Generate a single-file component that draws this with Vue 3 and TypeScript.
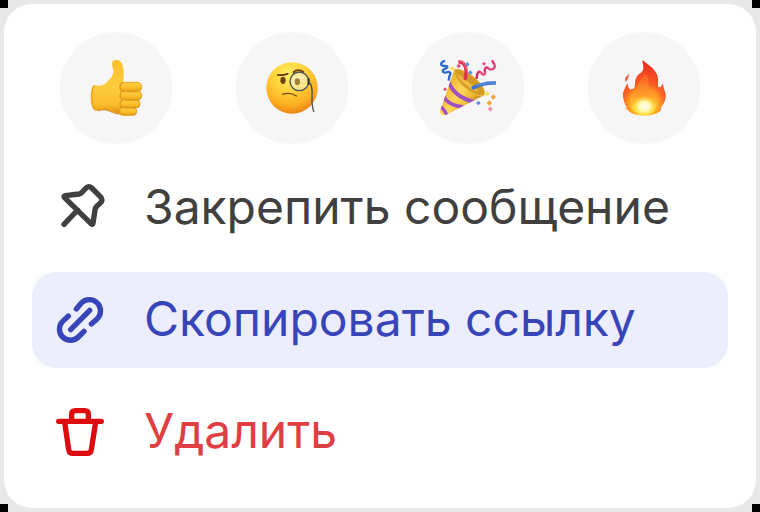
<script setup lang="ts">
import { ref } from 'vue'

type ActionId = 'pin' | 'copy' | 'delete'

interface Action {
  id: ActionId
  label: string
}

const actions: Action[] = [
  { id: 'pin', label: 'Закрепить сообщение' },
  { id: 'copy', label: 'Скопировать ссылку' },
  { id: 'delete', label: 'Удалить' },
]

const active = ref<ActionId>('copy')
</script>

<template>
  <main class="backdrop">
    <section class="menu">
      <div class="reactions">
        <button class="reaction" type="button" aria-label="Нравится">
          <svg class="emoji" viewBox="108 108 168 168" aria-hidden="true">
            <defs>
              <linearGradient id="hand" x1="0" y1="0" x2="0" y2="1">
                <stop offset="0" stop-color="#f9c02c" />
                <stop offset="0.5" stop-color="#ffcd3e" />
                <stop offset="0.82" stop-color="#fbbd2c" />
                <stop offset="1" stop-color="#e08e17" />
              </linearGradient>
              <linearGradient id="finger" x1="0" y1="0" x2="0" y2="1">
                <stop offset="0" stop-color="#ffcf45" />
                <stop offset="0.6" stop-color="#fbbd28" />
                <stop offset="1" stop-color="#e59a16" />
              </linearGradient>
            </defs>
            <path d="M126 183C141 187 153 185 162 177C175 165 185 155 184 140C183 129 176 117 183 111C191 105 206 108 210 119C217 135 216 154 213 178L232 188V260L212 271C190 268 182 263 168 259C154 255 145 262 128 259C112 250 113 195 126 183Z" fill="url(#hand)" />
            <path d="M126 184C117 197 117 243 129 258" fill="none" stroke="#e9a322" stroke-width="4" />
            <path d="M136 260C151 256 163 256 174 262C187 268 198 270 210 271" fill="none" stroke="#d88a16" stroke-width="3" />
            <g fill="url(#finger)" stroke="#dc9518" stroke-width="2.5">
              <rect x="203" y="250" width="51" height="24" rx="11" />
              <rect x="203" y="227" width="61" height="25" rx="12" />
              <rect x="204" y="201" width="65" height="28" rx="13" />
              <rect x="203" y="175" width="66" height="28" rx="13" />
            </g>
            <path d="M214 176C203 180 203 193 208 202C204 210 204 220 209 228C204 237 205 245 209 251" fill="none" stroke="#e19b1c" stroke-width="3" />
          </svg>
        </button>

        <button class="reaction" type="button" aria-label="Любопытно">
          <svg class="emoji" viewBox="108 108 168 168" aria-hidden="true">
            <defs>
              <radialGradient id="face" cx="0.45" cy="0.25" r="0.78">
                <stop offset="0" stop-color="#fff067" />
                <stop offset="0.4" stop-color="#ffd43b" />
                <stop offset="0.75" stop-color="#fcae21" />
                <stop offset="1" stop-color="#ec7d14" />
              </radialGradient>
            </defs>
            <circle cx="192" cy="192" r="77" fill="url(#face)" />
            <ellipse cx="165" cy="169" rx="8" ry="11" fill="#75410b" />
            <path d="M149 153C160 154 170 153 179 149" fill="none" stroke="#5b330c" stroke-width="5" stroke-linecap="round" />
            <path d="M196 145C204 136 218 137 226 144" fill="none" stroke="#7d3b10" stroke-width="5" stroke-linecap="round" />
            <path d="M164 211C176 207 193 208 205 216" fill="none" stroke="#70400d" stroke-width="4" stroke-linecap="round" />
            <circle cx="214" cy="172" r="28" fill="#f4e8a0" fill-opacity="0.82" stroke="#4e5457" stroke-width="4" />
            <path d="M191 169C196 150 220 146 233 158L199 190Z" fill="#ffffff" opacity="0.32" />
            <ellipse cx="208" cy="173" rx="8" ry="10" fill="#a18134" />
            <path d="M242 165V179" stroke="#292c2e" stroke-width="6" stroke-linecap="round" />
            <path d="M243 174C259 187 249 220 253 244Q254 256 258 264" fill="none" stroke="#4b4f50" stroke-width="4" />
          </svg>
        </button>

        <button class="reaction" type="button" aria-label="Праздник">
          <svg class="emoji" viewBox="108 108 168 168" aria-hidden="true">
            <defs>
              <linearGradient id="cone" x1="0" y1="0.3" x2="0.9" y2="0.9">
                <stop offset="0" stop-color="#e5a51d" />
                <stop offset="0.45" stop-color="#ffd85a" />
                <stop offset="0.7" stop-color="#edb62f" />
                <stop offset="1" stop-color="#a66a12" />
              </linearGradient>
              <clipPath id="cone-shape">
                <path d="M151 137L109 258Q106 275 124 274L240 214Z" />
              </clipPath>
            </defs>
            <path d="M151 137L109 258Q106 275 124 274L240 214Z" fill="url(#cone)" />
            <g clip-path="url(#cone-shape)" fill="none" stroke="#a14fc4">
              <path d="M132 170C144 204 172 225 211 234" stroke-width="12" />
              <path d="M116 213C126 235 145 246 179 249" stroke-width="11" />
              <path d="M105 243C116 251 124 262 132 278" stroke-width="10" />
            </g>
            <path d="M152 137C164 132 191 143 216 165C237 184 248 207 239 214C226 220 195 205 172 180C156 162 147 144 152 137Z" fill="#d39a23" stroke="#edbd46" stroke-width="3" />
            <path d="M156 147C176 160 202 178 225 204C204 202 169 174 156 147Z" fill="#edbd3f" />
            <path d="M163 114C184 112 191 136 183 168" fill="none" stroke="#dd3454" stroke-width="10" />
            <path d="M164 111C177 111 186 121 187 136" fill="none" stroke="#ff7189" stroke-width="3" />
            <path d="M204 193C225 181 246 176 276 177" fill="none" stroke="#3b72cd" stroke-width="11" />
            <path d="M218 185C238 178 255 177 276 177" fill="none" stroke="#6a9ee9" stroke-width="3" />
            <path d="M123 110C106 116 109 127 122 126C133 125 133 132 120 136C113 140 116 148 127 145C138 141 143 148 136 157L134 170" fill="none" stroke="#2f69ca" stroke-width="7" />
            <path d="M218 165C218 145 225 139 231 146C237 156 244 152 243 144C240 133 247 126 255 134C265 140 275 132 271 121C268 115 263 111 267 108" fill="none" stroke="#d52e63" stroke-width="7" />
            <path d="M227 143C235 157 246 153 243 143M251 131C264 141 273 130 270 120" fill="none" stroke="#f57ba0" stroke-width="3" />
            <path d="M190 114l7 7-7 7-7-7zM199 139l7 7-7 7-7-7zM223 230l7 7-7 7-7-7z" fill="#5b91dd" />
            <path d="M240 113l6 6-6 6-6-6zM123 190l6 6-6 6-6-6zM164 119l7 7-7 7-7-7z" fill="#e85478" />
            <path d="M144 127l7 7-7 7-7-7zM250 202l7 8-7 7-8-7z" fill="#f4e247" />
            <path d="M268 211l8 8-8 8-8-8zM256 229l8 8-8 8-8-8z" fill="#f2a344" />
            <path d="M259 247l8 8-8 8-8-8z" fill="#f092ab" />
          </svg>
        </button>

        <button class="reaction" type="button" aria-label="Огонь">
          <svg class="emoji" viewBox="108 108 168 168" aria-hidden="true">
            <defs>
              <radialGradient id="flame" gradientUnits="userSpaceOnUse" cx="192" cy="244" r="135">
                <stop offset="0" stop-color="#ffdc2b" />
                <stop offset="0.3" stop-color="#ffab23" />
                <stop offset="0.5" stop-color="#fa5d25" />
                <stop offset="1" stop-color="#e8291d" />
              </radialGradient>
              <linearGradient id="flame-inner" x1="0" y1="0" x2="0" y2="1">
                <stop offset="0" stop-color="#f96828" stop-opacity="0.7" />
                <stop offset="0.5" stop-color="#ff9a28" />
                <stop offset="1" stop-color="#ffe43b" />
              </linearGradient>
              <radialGradient id="flame-core">
                <stop offset="0" stop-color="#fffff4" />
                <stop offset="0.45" stop-color="#fffab0" />
                <stop offset="1" stop-color="#ffdf26" stop-opacity="0" />
              </radialGradient>
            </defs>
            <path d="M188 108C205 124 227 134 233 158C237 174 230 188 238 190C246 190 244 181 249 180C249 195 261 206 256 225C254 239 247 242 244 249L242 260C224 279 158 280 144 259L135 251L141 251C130 237 126 210 131 201C136 192 137 184 143 178C144 188 146 198 155 196C169 194 162 177 168 163C174 146 190 151 190 130C190 120 186 115 188 108Z" fill="url(#flame)" />
            <path d="M192 150C205 153 207 168 205 181C203 200 217 207 222 197C221 214 231 223 231 239C227 267 202 275 183 271C153 266 146 239 153 213C165 220 174 207 174 190C174 170 190 168 192 150Z" fill="url(#flame-inner)" />
            <ellipse cx="193" cy="247" rx="38" ry="32" fill="url(#flame-core)" />
            <path d="M148 149Q146 163 138 174Q131 163 140 157Z" fill="#ee5c45" />
          </svg>
        </button>
      </div>

      <div class="actions">
        <button
          v-for="action in actions"
          :key="action.id"
          type="button"
          class="action"
          :class="[action.id, { active: active === action.id }]"
          @click="active = action.id"
        >
          <svg v-if="action.id === 'pin'" class="icon" viewBox="48 42 144 144" aria-hidden="true">
            <path d="M76 77L117 72Q123 71 127 66L137 55Q146 45 155 54L181 80Q191 91 181 99L171 108Q166 113 165 120L159 160Q158 166 153 161L73 82Q69 78 76 77ZM113 120L72 163" />
          </svg>
          <svg v-else-if="action.id === 'copy'" class="icon" viewBox="108 108 144 144" aria-hidden="true">
            <path d="M169 147L184 129A33 33 0 0 1 232 176L214 192M145 168L128 184A33 33 0 0 0 175 231L192 214M152 209L209 151" />
          </svg>
          <svg v-else class="icon" viewBox="48 54 144 144" aria-hidden="true">
            <path d="M56 94H184M95 94V72Q95 62 106 62H134Q145 62 145 72V94M74 96L86 179Q88 190 99 190H141Q152 190 154 179L167 96" />
          </svg>
          <span class="label">{{ action.label }}</span>
        </button>
      </div>
    </section>
  </main>
</template>

<style>
body {
  margin: 0;
}
</style>

<style scoped>
.backdrop {
  box-sizing: border-box;
  display: grid;
  min-height: 100vh;
  padding: 4px;
  background:
    linear-gradient(#000, #000) left top / 8px 8px no-repeat,
    linear-gradient(#000, #000) right top / 8px 8px no-repeat,
    linear-gradient(#000, #000) left bottom / 8px 8px no-repeat,
    linear-gradient(#000, #000) right bottom / 8px 8px no-repeat,
    #e8e8e8;
  font-family: Inter, 'Liberation Sans', sans-serif;
}

.menu {
  display: flex;
  flex-direction: column;
  gap: 16px;
  padding: 28px;
  border-radius: 28px;
  background: #fff;
}

.reactions {
  display: flex;
  justify-content: space-between;
  padding: 0 28px;
}

.reaction {
  display: grid;
  place-items: center;
  width: 112px;
  height: 112px;
  padding: 0;
  border: 0;
  border-radius: 50%;
  background: #f6f6f6;
  cursor: pointer;
}

.emoji {
  width: 56px;
  height: 56px;
}

.actions {
  display: flex;
  flex-direction: column;
  gap: 16px;
}

.action {
  display: flex;
  align-items: center;
  gap: 40px;
  height: 96px;
  padding: 0 24px;
  border: 0;
  border-radius: 24px;
  background: transparent;
  color: #404040;
  font: inherit;
  font-size: 48px;
  line-height: 64px;
  text-align: left;
  white-space: nowrap;
  cursor: pointer;
}

.action.active {
  background: #ecedfd;
}

.action.copy {
  color: #3745b9;
}

.action.delete {
  color: #df3f42;
}

.label {
  padding-bottom: 2px;
}

.icon {
  flex: none;
  width: 48px;
  height: 48px;
  overflow: visible;
  fill: none;
  stroke: currentColor;
  stroke-width: 16;
  stroke-linecap: round;
  stroke-linejoin: round;
}

.delete .icon {
  stroke: #dd0b0e;
}
</style>
